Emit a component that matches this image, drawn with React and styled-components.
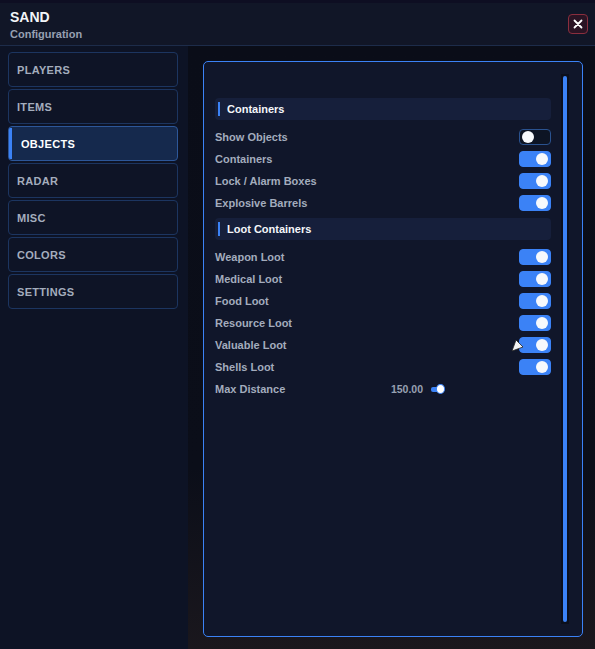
import styled, { createGlobalStyle } from "styled-components";

const Global = createGlobalStyle`
  html, body {
    margin: 0;
    padding: 0;
    background: #0b0f1c;
  }
  body {
    font-family: "Liberation Sans", Arial, sans-serif;
  }
`;

const Window = styled.div`
  width: 595px;
  height: 649px;
  display: flex;
  flex-direction: column;
  background: #0b0f1c;
  border-top: 3px solid #0e0e22;
  box-sizing: border-box;
  position: relative;
  overflow: hidden;
`;

const Header = styled.div`
  height: 42px;
  flex-shrink: 0;
  display: flex;
  align-items: center;
  justify-content: space-between;
  padding: 0 7px 0 10px;
  background: #111627;
  border-bottom: 1px solid #1d2c4a;
`;

const Titles = styled.div`
  display: flex;
  flex-direction: column;
  gap: 3px;
  padding-top: 2px;
`;

const Title = styled.div`
  color: #f2f4f8;
  font-weight: bold;
  font-size: 14px;
  line-height: 16px;
`;

const Subtitle = styled.div`
  color: #97a0b2;
  font-size: 11px;
  font-weight: bold;
  line-height: 13px;
`;

const Close = styled.button`
  width: 20px;
  height: 20px;
  padding: 0;
  display: flex;
  align-items: center;
  justify-content: center;
  background: #2a1424;
  border: 1px solid #8a2e3e;
  border-radius: 4px;
  cursor: pointer;
`;

const Body = styled.div`
  flex: 1;
  display: flex;
  min-height: 0;
`;

const Sidebar = styled.nav`
  width: 188px;
  flex-shrink: 0;
  display: flex;
  flex-direction: column;
  gap: 2px;
  padding: 6px 10px 0 8px;
  box-sizing: border-box;
  background: #0d1325;
`;

const Tab = styled.div`
  position: relative;
  height: 35px;
  display: flex;
  align-items: center;
  padding-left: ${(p) => (p.$active ? "12px" : "8px")};
  box-sizing: border-box;
  border-radius: 4px;
  border: 1px solid ${(p) => (p.$active ? "#2d5799" : "#1c3560")};
  background: ${(p) => (p.$active ? "#15294d" : "#0e1426")};
  color: ${(p) => (p.$active ? "#ffffff" : "#a4adbd")};
  font-size: 11px;
  font-weight: bold;
  letter-spacing: 0.3px;
  overflow: hidden;

  &::before {
    content: "";
    display: ${(p) => (p.$active ? "block" : "none")};
    position: absolute;
    left: 0;
    top: 1px;
    bottom: 1px;
    width: 3px;
    background: #3b82f6;
  }
`;

const Content = styled.div`
  flex: 1;
  padding: 15px 12px 12px 15px;
  background: linear-gradient(180deg, #0a0d18 0%, #0b0e19 70%, #1a171d 100%);
`;

const Panel = styled.div`
  height: 100%;
  box-sizing: border-box;
  border: 1px solid #3b82f6;
  border-radius: 5px;
  background: #10162a;
  display: flex;
  padding: 36px 13px 12px 11px;
`;

const List = styled.div`
  flex: 1;
  display: flex;
  flex-direction: column;
`;

const Section = styled.div`
  height: 22px;
  display: flex;
  align-items: center;
  gap: 7px;
  padding-left: 3px;
  margin: ${(p) => (p.$first ? "0" : "4px")} 0 6px;
  border-radius: 4px;
  background: #161f3b;
  color: #f4f6fa;
  font-size: 11px;
  font-weight: bold;

  &::before {
    content: "";
    width: 2px;
    height: 14px;
    background: #3b82f6;
  }
`;

const Row = styled.div`
  height: 22px;
  display: flex;
  align-items: center;
  justify-content: space-between;
  color: #a3acbd;
  font-size: 11px;
  font-weight: bold;
`;

const Toggle = styled.div`
  width: 32px;
  height: 16px;
  box-sizing: border-box;
  border-radius: 4px;
  display: flex;
  align-items: center;
  justify-content: ${(p) => (p.$on ? "flex-end" : "flex-start")};
  padding: 0 2px;
  background: ${(p) => (p.$on ? "#3b82f6" : "#0d1424")};
  border: 1px solid ${(p) => (p.$on ? "#3b82f6" : "#2a528f")};

  &::after {
    content: "";
    width: 12px;
    height: 12px;
    border-radius: 50%;
    background: #f7f9fc;
  }
`;

const SliderWrap = styled.div`
  display: flex;
  align-items: center;
  gap: 8px;
  margin-right: 106px;
`;

const Value = styled.span`
  color: #97a0b2;
  font-size: 10.5px;
  font-weight: bold;
`;

const Slider = styled.div`
  width: 14px;
  height: 10px;
  display: flex;
  align-items: center;

  &::before {
    content: "";
    width: 7px;
    height: 5px;
    border-radius: 2px 0 0 2px;
    background: #3b82f6;
  }
  &::after {
    content: "";
    width: 8px;
    height: 8px;
    margin-left: -2px;
    border-radius: 50%;
    background: #fff;
    border: 1px solid #3b82f6;
  }
`;

const ScrollTrack = styled.div`
  width: 8px;
  margin-left: 10px;
  margin-top: -24px;
  padding: 2px;
  box-sizing: border-box;
  background: #0b0f1c;
  display: flex;
`;

const ScrollThumb = styled.div`
  flex: 1;
  border-radius: 2px;
  background: #3b82f6;
`;

const Pointer = styled.svg`
  position: absolute;
  left: 511px;
  top: 336px;
`;

const tabs = ["PLAYERS", "ITEMS", "OBJECTS", "RADAR", "MISC", "COLORS", "SETTINGS"];

const containers = [
  ["Show Objects", false],
  ["Containers", true],
  ["Lock / Alarm Boxes", true],
  ["Explosive Barrels", true],
];

const loot = [
  ["Weapon Loot", true],
  ["Medical Loot", true],
  ["Food Loot", true],
  ["Resource Loot", true],
  ["Valuable Loot", true],
  ["Shells Loot", true],
];

export default function App() {
  return (
    <Window>
      <Global />
      <Header>
        <Titles>
          <Title>SAND</Title>
          <Subtitle>Configuration</Subtitle>
        </Titles>
        <Close>
          <svg width="10" height="10" viewBox="0 0 10 10">
            <path d="M1.5 1.5 L8.5 8.5 M8.5 1.5 L1.5 8.5" stroke="#fff" strokeWidth="1.8" strokeLinecap="round" />
          </svg>
        </Close>
      </Header>
      <Body>
        <Sidebar>
          {tabs.map((t) => (
            <Tab key={t} $active={t === "OBJECTS"}>
              {t}
            </Tab>
          ))}
        </Sidebar>
        <Content>
          <Panel>
            <List>
              <Section $first>Containers</Section>
              {containers.map(([label, on]) => (
                <Row key={label}>
                  {label}
                  <Toggle $on={on} />
                </Row>
              ))}
              <Section>Loot Containers</Section>
              {loot.map(([label, on]) => (
                <Row key={label}>
                  {label}
                  <Toggle $on={on} />
                </Row>
              ))}
              <Row>
                Max Distance
                <SliderWrap>
                  <Value>150.00</Value>
                  <Slider />
                </SliderWrap>
              </Row>
            </List>
            <ScrollTrack>
              <ScrollThumb />
            </ScrollTrack>
          </Panel>
        </Content>
      </Body>
      <Pointer width="14" height="14" viewBox="0 0 14 14">
        <path d="M1 12 L5 1 L12 8 Z" fill="#f4f4f4" stroke="#222" strokeWidth="0.8" />
      </Pointer>
    </Window>
  );
}
